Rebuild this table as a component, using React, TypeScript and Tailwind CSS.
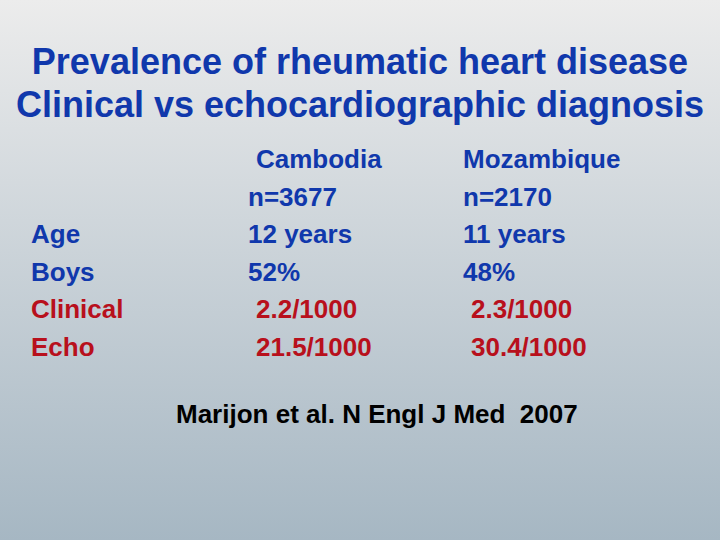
const rows = [
  { label: '', a: 'Cambodia', b: 'Mozambique', padA: true, padB: false, tone: 'blue' },
  { label: '', a: 'n=3677', b: 'n=2170', padA: false, padB: false, tone: 'blue' },
  { label: 'Age', a: '12 years', b: '11 years', padA: false, padB: false, tone: 'blue' },
  { label: 'Boys', a: '52%', b: '48%', padA: false, padB: false, tone: 'blue' },
  { label: 'Clinical', a: '2.2/1000', b: '2.3/1000', padA: true, padB: true, tone: 'red' },
  { label: 'Echo', a: '21.5/1000', b: '30.4/1000', padA: true, padB: true, tone: 'red' },
];

export default function App() {
  return (
    <div
      className="w-[720px] h-[540px] overflow-hidden bg-gradient-to-b from-[#ececec] to-[#a6b7c3] font-['Liberation_Sans',Arial,sans-serif] font-bold"
    >
      <h1 className="pt-[40px] text-center text-[36px] leading-[43px] text-[#1038ac] whitespace-nowrap">
        Prevalence of rheumatic heart disease
        <br />
        Clinical vs echocardiographic diagnosis
      </h1>

      <div className="mt-[15px] pl-[31px] grid grid-cols-[217px_215px_1fr] text-[26px] leading-[37.5px]">
        {rows.map((r, i) => {
          const color = r.tone === 'red' ? 'text-[#b8101c]' : 'text-[#1038ac]';
          return (
            <div key={i} className="contents">
              <div className={color}>{r.label}</div>
              <div className={`${color} ${r.padA ? 'pl-[8px]' : ''}`}>{r.a}</div>
              <div className={`${color} ${r.padB ? 'pl-[8px]' : ''}`}>{r.b}</div>
            </div>
          );
        })}
      </div>

      <p className="mt-[30px] pl-[176px] text-[26px] leading-[37.5px] text-black whitespace-pre">
        Marijon et al. N Engl J Med  2007
      </p>
    </div>
  );
}
